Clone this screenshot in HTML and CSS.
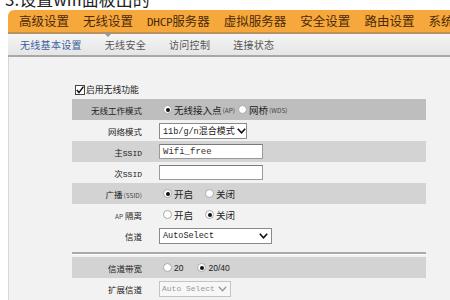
FILE: index.html
```html
<!DOCTYPE html>
<html>
<head>
<meta charset="utf-8">
<link rel="stylesheet" href="styles.css">
</head>
<body>
<div class="caption"><span>3.设置wifi面板出的</span></div>
<div class="frame">
  <nav class="menu">
    <span class="mi">高级设置</span>
    <span class="mi active">无线设置</span>
    <span class="mi"><span class="lat">DHCP</span>服务器</span>
    <span class="mi">虚拟服务器</span>
    <span class="mi">安全设置</span>
    <span class="mi">路由设置</span>
    <span class="mi">系统工具</span>
  </nav>
  <div class="subnav">
    <span class="on">无线基本设置</span>
    <span>无线安全</span>
    <span>访问控制</span>
    <span>连接状态</span>
  </div>
  <div class="content">
    <div class="form">
      <div class="enable">
        <span class="cb"><svg width="10" height="10" viewBox="0 0 10 10"><polyline points="1.8,5 4,7.6 8.4,1.6" fill="none" stroke="#111" stroke-width="1.5"/></svg></span>
        <span>启用无线功能</span>
      </div>
      <div class="row dark">
        <div class="lbl">无线工作模式</div>
        <div class="val">
          <span class="rd on"></span><span>无线接入点</span><span class="sm">(AP)</span>
          <span class="rd gap"></span><span>网桥</span><span class="sm">(WDS)</span>
        </div>
      </div>
      <div class="row">
        <div class="lbl">网络模式</div>
        <div class="val">
          <span class="sel w87"><span><span class="mono">11b/g/n</span>混合模式</span><svg class="chev" width="9" height="6" viewBox="0 0 9 6"><polyline points="0.8,0.8 4.5,4.8 8.2,0.8" fill="none" stroke="#111" stroke-width="1.6"/></svg></span>
        </div>
      </div>
      <div class="row gray">
        <div class="lbl">主<span class="mono">SSID</span></div>
        <div class="val"><span class="inp"><span class="mono">Wifi_free</span></span></div>
      </div>
      <div class="row">
        <div class="lbl">次<span class="mono">SSID</span></div>
        <div class="val"><span class="inp"></span></div>
      </div>
      <div class="row gray">
        <div class="lbl">广播<span class="sm">(SSID)</span></div>
        <div class="val">
          <span class="rd on"></span><span>开启</span>
          <span class="rd gap2"></span><span>关闭</span>
        </div>
      </div>
      <div class="row">
        <div class="lbl"><span class="sm">AP</span> 隔离</div>
        <div class="val">
          <span class="rd"></span><span>开启</span>
          <span class="rd on gap2"></span><span>关闭</span>
        </div>
      </div>
      <div class="row">
        <div class="lbl">信道</div>
        <div class="val">
          <span class="sel w112"><span class="mono">AutoSelect</span><svg class="chev" width="9" height="6" viewBox="0 0 9 6"><polyline points="0.8,0.8 4.5,4.8 8.2,0.8" fill="none" stroke="#111" stroke-width="1.6"/></svg></span>
        </div>
      </div>
      <div class="sep"></div>
      <div class="row gray">
        <div class="lbl">信道带宽</div>
        <div class="val">
          <span class="rd"></span><span class="num">20</span>
          <span class="rd on gap3"></span><span class="num">20/40</span>
        </div>
      </div>
      <div class="row">
        <div class="lbl">扩展信道</div>
        <div class="val">
          <span class="sel w71 dis"><span class="mono">Auto Select</span><svg class="chev" width="9" height="6" viewBox="0 0 9 6"><polyline points="0.8,0.8 4.5,4.8 8.2,0.8" fill="none" stroke="#999" stroke-width="1.4"/></svg></span>
        </div>
      </div>
    </div>
  </div>
</div>
</body>
</html>
```
FILE: styles.css
```css
html, body {
  margin: 0;
  width: 450px;
  height: 300px;
  overflow: hidden;
}
body {
  background: #fff;
  font-family: "Noto Sans CJK SC", "Liberation Sans", sans-serif;
  color: #222;
}
.caption {
  height: 9px;
  overflow: hidden;
  padding-left: 5px;
}
.caption span {
  display: block;
  margin-top: -11px;
  font-size: 17px;
  line-height: 20px;
  color: #222;
  white-space: nowrap;
}
.frame {
  margin-left: 8px;
  margin-top: 1px;
}
.menu {
  display: flex;
  gap: 14px;
  height: 22px;
  padding-left: 11px;
  background: #f6a83c;
  border-top-left-radius: 6px;
  border-bottom: 2px solid #b9915f;
  white-space: nowrap;
  font-size: 12.5px;
  line-height: 22px;
  color: #4a2808;
}
.mi {
  flex: none;
}
.mi .lat {
  font-family: "DejaVu Sans Mono", monospace;
  font-size: 11px;
  letter-spacing: -0.3px;
}
.mi.active {
  position: relative;
}
.mi.active::after {
  content: "";
  position: absolute;
  left: 50%;
  top: 22px;
  margin-left: -5px;
  border-left: 5px solid transparent;
  border-right: 5px solid transparent;
  border-top: 5px solid #a39585;
}
.subnav {
  display: flex;
  gap: 23px;
  height: 21px;
  align-items: center;
  padding-left: 12px;
  background: linear-gradient(#f5f5f5, #e5e5e5);
  border-bottom: 2px solid #a8a8a8;
  font-size: 10px;
  color: #555;
  white-space: nowrap;
  letter-spacing: 0.3px;
}
.subnav .on {
  color: #3d5f9e;
}
.content {
  background: #f2f2f2;
  border-left: 1px solid #d6d6d6;
  height: 260px;
  padding: 25px 0 0 63px;
}
.form {
  width: 354px;
}
.enable {
  display: flex;
  align-items: center;
  height: 15px;
  margin-bottom: 2px;
  font-size: 8.8px;
  color: #222;
}
.cb {
  width: 10px;
  height: 10px;
  box-sizing: border-box;
  border: 1px solid #444;
  background: #fff;
  margin: 0 1px 0 3px;
  display: flex;
}
.cb svg {
  margin: -1px;
}
.row {
  display: grid;
  grid-template-columns: 70px 1fr;
  column-gap: 18px;
  height: 21px;
  align-items: center;
}
.row.dark {
  background: #bebebe;
}
.row.gray {
  background: #d3d3d3;
}
.lbl {
  text-align: right;
  font-size: 8.5px;
  color: #222;
  white-space: nowrap;
}
.val {
  display: flex;
  align-items: center;
  font-size: 9.5px;
  color: #222;
  white-space: nowrap;
}
.sm {
  font-size: 6.5px;
  color: #444;
  margin-left: 1px;
}
.mono {
  font-family: "Liberation Mono", "DejaVu Sans Mono", monospace;
}
.lbl .mono {
  font-size: 8px;
}
.num {
  font-family: "Liberation Sans", sans-serif;
  font-size: 8.5px;
}
.rd {
  display: inline-block;
  width: 9px;
  height: 9px;
  box-sizing: border-box;
  border-radius: 50%;
  border: 1px solid #a9a9a9;
  background: #fff;
  margin: 0 2px 0 3px;
  position: relative;
  flex: none;
}
.rd.on::after {
  content: "";
  position: absolute;
  left: 1.5px;
  top: 1.5px;
  width: 4px;
  height: 4px;
  border-radius: 50%;
  background: #111;
}
.rd.gap {
  margin-left: 3px;
}
.rd.gap2 {
  margin-left: 12px;
}
.rd.gap3 {
  margin-left: 14px;
}
.sel {
  display: inline-flex;
  align-items: center;
  justify-content: space-between;
  height: 16px;
  box-sizing: border-box;
  border: 1px solid #8a8a8a;
  background: #fff;
  padding: 0 3px 0 3px;
  font-size: 9px;
  color: #222;
  margin-left: -1px;
}
.sel .mono {
  font-size: 8.5px;
}
.sel .chev {
  flex: none;
  margin-left: 2px;
}
.w87 { width: 88px; }
.w112 { width: 113px; }
.w71 { width: 72px; }
.sel.dis {
  color: #999;
  border-color: #c4c4c4;
  background: #f7f7f7;
  padding-left: 2px;
}
.sel.dis .mono {
  font-size: 8px;
}
.inp {
  display: inline-flex;
  align-items: center;
  width: 104px;
  height: 15px;
  box-sizing: border-box;
  border: 1px solid #9a9a9a;
  border-top-color: #7a7a7a;
  background: #fff;
  padding-left: 3px;
  font-size: 9px;
  color: #333;
  margin-left: -1px;
}
.sep {
  margin-top: 6px;
  height: 2px;
  background: #a9a9a9;
  border-bottom: 1px solid #fafafa;
  margin-bottom: 2px;
}
```
